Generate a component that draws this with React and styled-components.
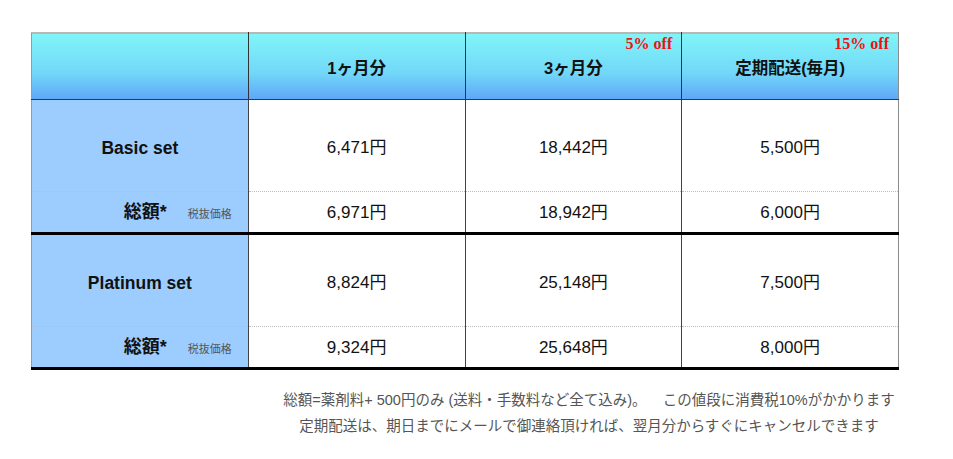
import React from 'react'
import styled, { createGlobalStyle } from 'styled-components'

const GlobalStyle = createGlobalStyle`
  body {
    margin: 0;
    background: #ffffff;
    font-family: 'Liberation Sans', 'Noto Sans CJK JP', sans-serif;
    color: #111;
  }
`

const Page = styled.div`
  padding: 32px 0 0 31px;
  width: 868px;
`

const Table = styled.table`
  width: 868px;
  border-collapse: collapse;
  table-layout: fixed;
  border-top: 1px solid #b8b8b8;
  border-right: 1px solid #8c8c8c;
  border-left: 1px solid #9a9a9a;
  line-height: 1.2;
`

const HeadCell = styled.th`
  position: relative;
  height: 61px;
  padding: 5px 0 0;
  background: linear-gradient(#80f5f8 0%, #72d7f8 60%, #5fa6f8 100%);
  border-bottom: 1px solid #2e3a55;
  border-left: 1px solid #333;
  font-size: 16.5px;
  font-weight: 700;
  text-align: center;
  vertical-align: middle;
  &:first-child {
    border-left: none;
  }
`

const Off = styled.span`
  position: absolute;
  top: 1px;
  right: 9px;
  font-family: 'Liberation Serif', serif;
  font-weight: 700;
  font-size: 16px;
  color: #ee1111;
`

const LabelCell = styled.td`
  background: #9dcdfe;
  text-align: center;
  font-size: 17.5px;
  font-weight: 700;
  padding: ${p => p.$tall ? '6px 0 0' : '2px 0 0'};
  height: ${p => p.$tall ? '85px' : '38px'};
  border-top: ${p => p.$thick ? '3px solid #000' : p.$dotted ? '1px dotted #bdbdbd' : 'none'};
  border-bottom: ${p => p.$last ? '3px solid #000' : 'none'};
`

const TotalLabel = styled.div`
  display: flex;
  align-items: baseline;
  justify-content: flex-end;
  gap: 21px;
  padding-right: 16px;
  font-size: 18px;
  font-weight: 700;
`

const TaxNote = styled.span`
  font-size: 11px;
  font-weight: 400;
  color: #555;
`

const PriceCell = styled.td`
  background: #fff;
  text-align: center;
  font-size: 17px;
  font-weight: 400;
  padding: ${p => p.$tall ? '6px 0 0' : '2px 0 0'};
  border-left: 1px solid #444;
  height: ${p => p.$tall ? '85px' : '38px'};
  border-top: ${p => p.$thick ? '3px solid #000' : p.$dotted ? '1px dotted #bdbdbd' : 'none'};
  border-bottom: ${p => p.$last ? '3px solid #000' : 'none'};
`

const Notes = styled.div`
  margin: 17px 0 0 233px;
  width: 650px;
  text-align: center;
  font-size: 14.5px;
  line-height: 26px;
  color: #555;
`

const heads = [
  { title: '1ヶ月分' },
  { title: '3ヶ月分', off: '5% off' },
  { title: '定期配送(毎月)', off: '15% off' },
]

const sets = [
  { name: 'Basic set', prices: ['6,471円', '18,442円', '5,500円'], totals: ['6,971円', '18,942円', '6,000円'] },
  { name: 'Platinum set', prices: ['8,824円', '25,148円', '7,500円'], totals: ['9,324円', '25,648円', '8,000円'] },
]

export default function App() {
  return (
    <Page>
      <GlobalStyle />
      <Table>
        <thead>
          <tr>
            <HeadCell />
            {heads.map(h => (
              <HeadCell key={h.title}>
                {h.off && <Off>{h.off}</Off>}
                {h.title}
              </HeadCell>
            ))}
          </tr>
        </thead>
        <tbody>
          {sets.map((s, i) => {
            const last = i === sets.length - 1
            return (
              <React.Fragment key={s.name}>
                <tr>
                  <LabelCell $tall $thick={i > 0}>{s.name}</LabelCell>
                  {s.prices.map((p, j) => (
                    <PriceCell key={j} $tall $thick={i > 0}>{p}</PriceCell>
                  ))}
                </tr>
                <tr>
                  <LabelCell $dotted $last={last}>
                    <TotalLabel>
                      総額*
                      <TaxNote>税抜価格</TaxNote>
                    </TotalLabel>
                  </LabelCell>
                  {s.totals.map((p, j) => (
                    <PriceCell key={j} $dotted $last={last}>{p}</PriceCell>
                  ))}
                </tr>
              </React.Fragment>
            )
          })}
        </tbody>
      </Table>
      <Notes>
        総額=薬剤料+ 500円のみ (送料・手数料など全て込み)。&nbsp;&nbsp;&nbsp; この値段に消費税10%がかかります
        <br />
        定期配送は、期日までにメールで御連絡頂ければ、翌月分からすぐにキャンセルできます
      </Notes>
    </Page>
  )
}
